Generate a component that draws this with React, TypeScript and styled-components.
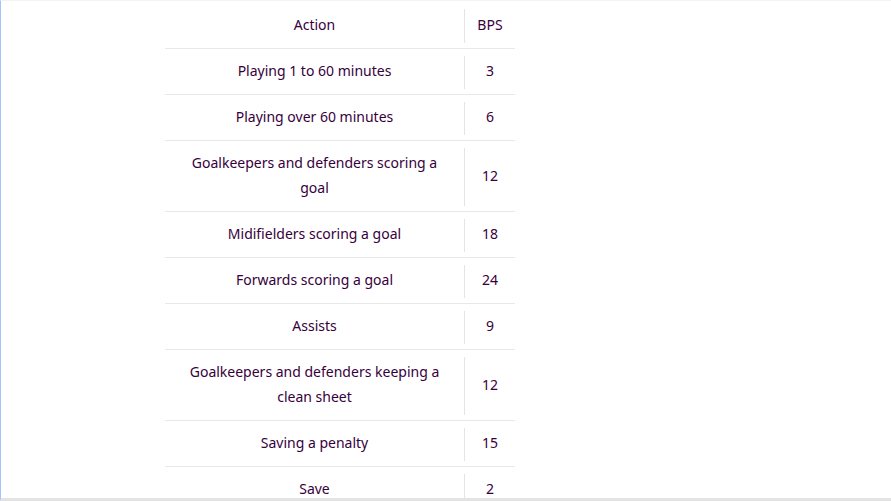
import styled, { createGlobalStyle } from 'styled-components'

const GlobalStyle = createGlobalStyle`
  html, body {
    margin: 0;
    padding: 0;
    background: #ffffff;
  }
  body {
    font-family: 'Noto Sans', 'Liberation Sans', Arial, sans-serif;
    color: #37003c;
  }
`

const Frame = styled.div`
  box-sizing: border-box;
  height: 501px;
  overflow: hidden;
  border-top: 1px solid #f3f3f3;
  border-left: 1px solid #a3c2ff;
  border-bottom: 3px solid #e3e3e3;
  padding-left: 164px;
`

const Table = styled.div`
  width: 350px;
  font-size: 14px;
  color: #37003c;
`

const Row = styled.div<{ $head?: boolean }>`
  display: grid;
  grid-template-columns: 1fr 51px;
  align-items: stretch;
  padding: ${(p) => (p.$head ? '8px 0 5px' : '7px 0 5px')};
  border-bottom: 1px solid #e8e8e8;
`

const ActionCell = styled.div`
  padding: 2px 16px 6px;
  line-height: 25px;
  text-align: center;
  display: flex;
  align-items: center;
  justify-content: center;
`

const PointsCell = styled.div<{ $head?: boolean }>`
  padding: ${(p) => (p.$head ? '3px 0 6px' : '2px 0 6px')};
  line-height: 25px;
  border-left: 1px solid #e4e4e4;
  display: flex;
  align-items: center;
  justify-content: center;
`

const rows: [string, number][] = [
  ['Playing 1 to 60 minutes', 3],
  ['Playing over 60 minutes', 6],
  ['Goalkeepers and defenders scoring a goal', 12],
  ['Midifielders scoring a goal', 18],
  ['Forwards scoring a goal', 24],
  ['Assists', 9],
  ['Goalkeepers and defenders keeping a clean sheet', 12],
  ['Saving a penalty', 15],
  ['Save', 2],
]

export default function App() {
  return (
    <>
      <GlobalStyle />
      <Frame>
        <Table>
          <Row $head>
            <ActionCell>Action</ActionCell>
            <PointsCell $head>BPS</PointsCell>
          </Row>
          {rows.map(([action, bps], i) => (
            <Row key={i}>
              <ActionCell>{action}</ActionCell>
              <PointsCell>{bps}</PointsCell>
            </Row>
          ))}
        </Table>
      </Frame>
    </>
  )
}
